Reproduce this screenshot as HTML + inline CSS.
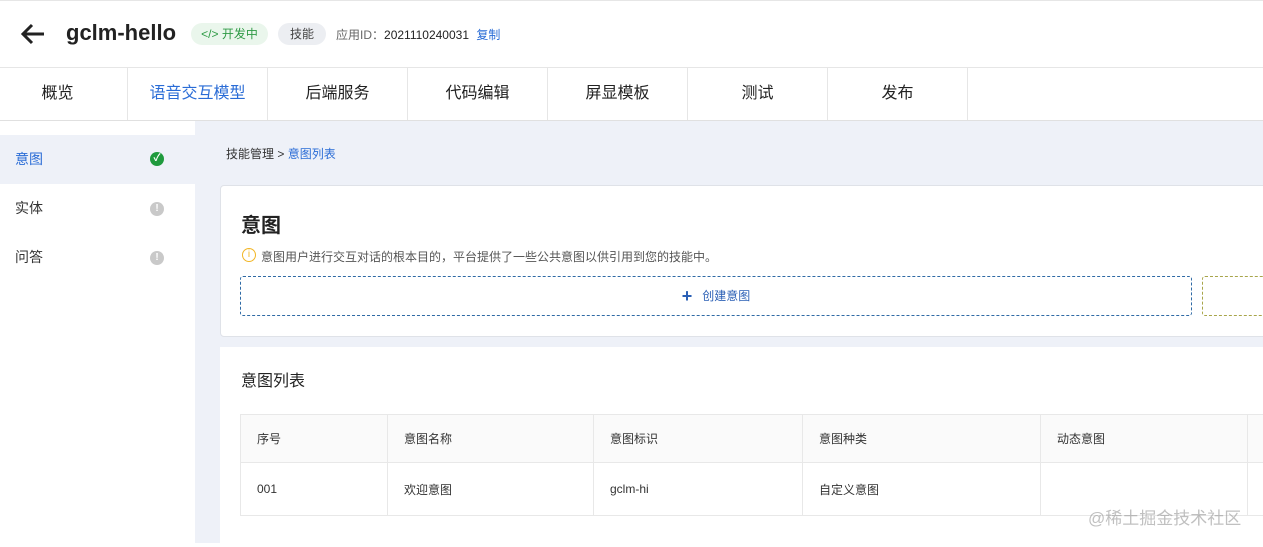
<!DOCTYPE html>
<html><head><meta charset="utf-8"><style>
*{box-sizing:border-box;margin:0;padding:0}
body{width:1263px;height:543px;overflow:hidden;background:#fff;font-family:"Liberation Sans","Noto Sans CJK SC",sans-serif;color:#333;position:relative}
.abs{position:absolute}
.tab{position:absolute;top:68px;height:52px;width:140px;border-right:1px solid #e6e6e6;font-size:16px;line-height:52px;text-align:center;color:#222}
.side{position:absolute;left:0;width:195px;height:49px;font-size:14px;line-height:49px;padding-left:15px}
.dot{position:absolute;left:150px;top:18px;width:14px;height:14px;border-radius:50%;background:#c9c9c9;color:#fff;font-size:10px;line-height:14px;text-align:center;font-weight:bold}
td{border:1px solid #e8e8e8;font-size:12px;padding-left:16px;color:#333}
</style></head><body>
<div class="abs" style="left:0;top:0;width:1263px;height:1px;background:#e6e6e6"></div>
<svg class="abs" style="left:20px;top:23px" width="26" height="22" viewBox="0 0 26 22"><path d="M24 11H3M12 2L3 11l9 9" stroke="#222" stroke-width="3" fill="none"/></svg>
<div class="abs" style="left:66px;top:20px;font-size:22px;font-weight:bold;color:#222">gclm-hello</div>
<div class="abs" style="left:191px;top:23px;width:77px;height:22px;border-radius:11px;background:#eaf6ec;color:#2e9a45;font-size:12px;line-height:22px;text-align:center">&lt;/&gt; 开发中</div>
<div class="abs" style="left:278px;top:23px;width:48px;height:22px;border-radius:11px;background:#eceef2;color:#444;font-size:12px;line-height:22px;text-align:center">技能</div>
<div class="abs" style="left:336px;top:26px;font-size:12px;color:#666">应用ID：<span style="color:#222">2021110240031</span> <span style="color:#2a6cd6;margin-left:4px">复制</span></div>
<div class="abs" style="left:0;top:67px;width:1263px;height:1px;background:#e6e6e6"></div>
<div class="tab" style="left:-12px;border-left:none">概览</div>
<div class="tab" style="left:128px;color:#2a6cd6">语音交互模型</div>
<div class="tab" style="left:268px">后端服务</div>
<div class="tab" style="left:408px">代码编辑</div>
<div class="tab" style="left:548px">屏显模板</div>
<div class="tab" style="left:688px">测试</div>
<div class="tab" style="left:828px">发布</div>
<div class="abs" style="left:0;top:120px;width:1263px;height:1px;background:#e0e0e0"></div>
<div class="abs" style="left:195px;top:121px;width:1068px;height:422px;background:#eef1f8"></div>
<div class="side" style="top:135px;background:#eef1f8;color:#2a6cd6">意图<div class="dot" style="background:#1f9a3d;top:17px">✓</div></div>
<div class="side" style="top:184px">实体<div class="dot">!</div></div>
<div class="side" style="top:233px">问答<div class="dot">!</div></div>
<div class="abs" style="left:226px;top:145px;font-size:12px;color:#333">技能管理 &gt; <span style="color:#2a6cd6">意图列表</span></div>
<div class="abs" style="left:220px;top:185px;width:1050px;height:152px;background:#fff;border:1px solid #dfe2e8;border-radius:4px"></div>
<div class="abs" style="left:241px;top:209px;font-size:20px;font-weight:bold;color:#222">意图</div>
<div class="abs" style="left:242px;top:248px;width:14px;height:14px;border:1.5px solid #f2b626;border-radius:50%;color:#f2b626;font-size:10px;line-height:11px;text-align:center">i</div>
<div class="abs" style="left:261px;top:248px;font-size:12px;color:#555">意图用户进行交互对话的根本目的，平台提供了一些公共意图以供引用到您的技能中。</div>
<div class="abs" style="left:240px;top:276px;width:952px;height:40px;border:1px dashed #2f6aa5;border-radius:3px;font-size:12px;line-height:38px;text-align:center;color:#2a5fb5"><b style="font-size:18px;vertical-align:-2px">+</b>&nbsp;&nbsp; 创建意图</div>
<div class="abs" style="left:1202px;top:276px;width:80px;height:40px;border:1px dashed #a8a54a;border-radius:3px"></div>
<div class="abs" style="left:220px;top:347px;width:1050px;height:200px;background:#fff"></div>
<div class="abs" style="left:241px;top:367px;font-size:16px;color:#222">意图列表</div>
<table class="abs" style="left:240px;top:414px;width:1030px;border-collapse:collapse">
<tr style="height:48px;background:#fafafa"><td style="width:147px">序号</td><td style="width:206px">意图名称</td><td style="width:209px">意图标识</td><td style="width:238px">意图种类</td><td style="width:207px">动态意图</td><td></td></tr>
<tr style="height:53px"><td>001</td><td>欢迎意图</td><td>gclm-hi</td><td>自定义意图</td><td></td><td></td></tr>
</table>
<div class="abs" style="left:1088px;top:504px;font-size:17px;color:rgba(150,150,150,.6)">@稀土掘金技术社区</div>
</body></html>
